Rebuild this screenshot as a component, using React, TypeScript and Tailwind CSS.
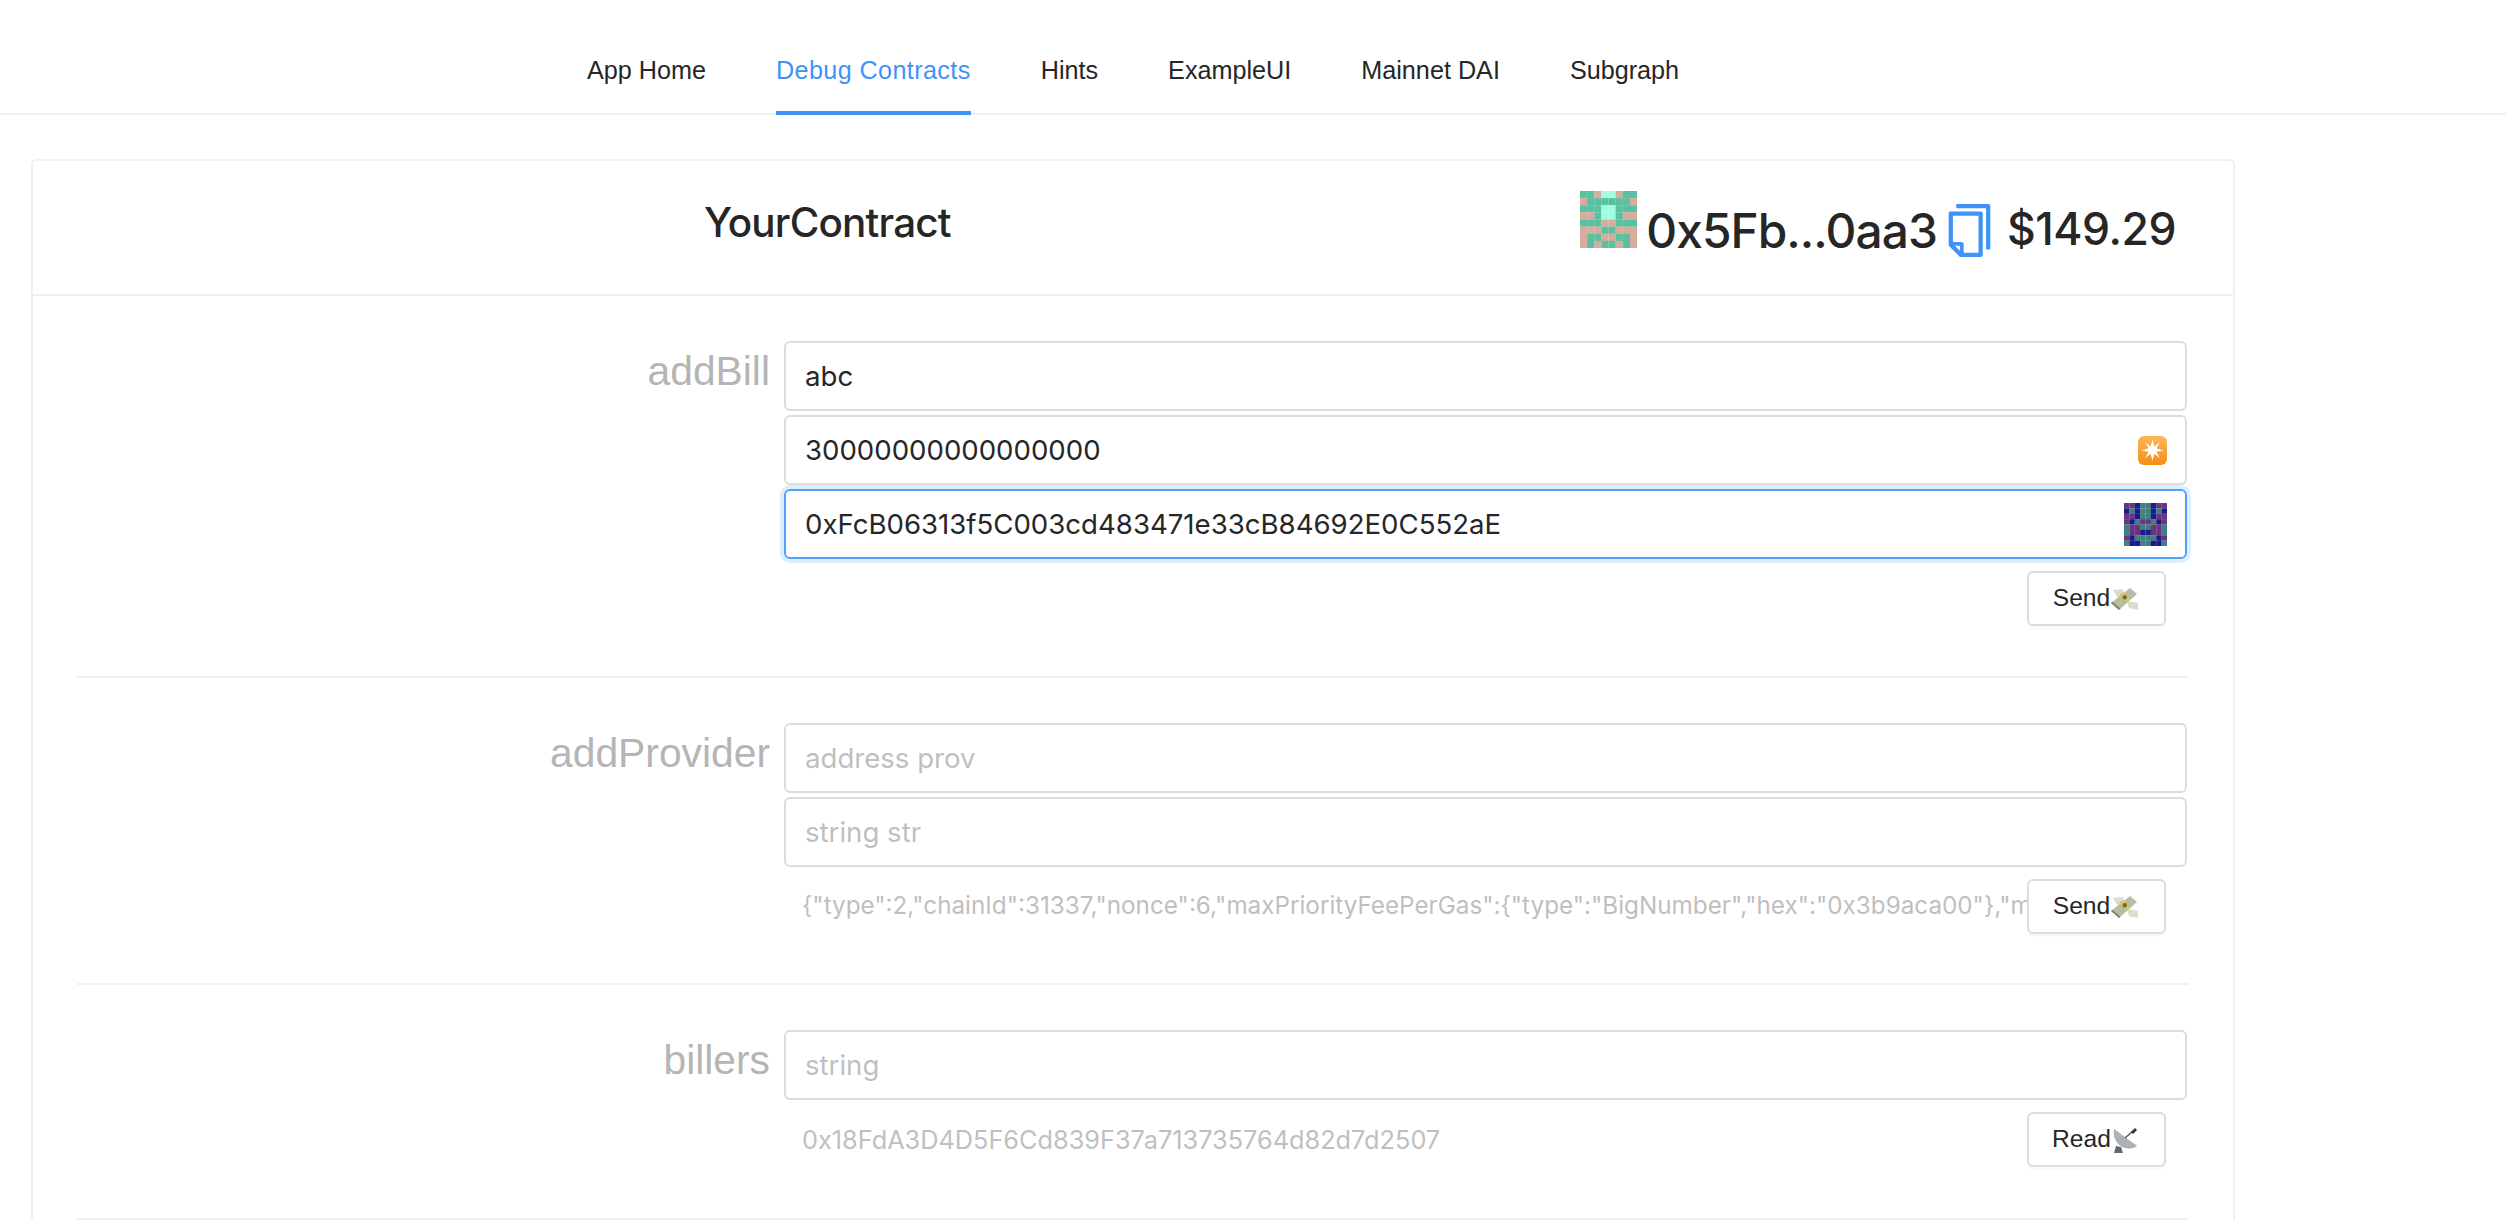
import React from 'react';

const navItems = ['App Home', 'Debug Contracts', 'Hints', 'ExampleUI', 'Mainnet DAI', 'Subgraph'];

const G = '#5ac1a0';
const K = '#d8ac9c';
const M = '#9ffde1';
const P = '#6b3480';
const B = '#1c1a8f';
const T = '#3f7f7f';

const contractBlockie = [
    [G, G, K, M, M, K, G, G],
    [K, G, G, G, G, G, G, K],
    [G, G, G, M, M, G, G, G],
    [K, K, G, M, M, G, K, K],
    [G, G, G, K, K, G, G, G],
    [K, K, K, G, G, K, K, K],
    [K, G, G, K, K, G, G, K],
    [K, G, K, G, G, K, G, K],
];

const addressBlockie = [
    [P, P, B, T, T, B, P, P],
    [B, T, B, T, T, B, T, B],
    [P, P, B, T, T, B, P, P],
    [P, B, T, P, P, T, B, P],
    [T, P, P, T, T, P, P, T],
    [T, P, P, B, B, P, P, T],
    [P, B, T, T, T, T, B, P],
    [T, B, B, T, T, B, B, T],
];

const Blockie = ({ cells, size }: { cells: string[][]; size: number }) => (
    <svg width={size} height={size} viewBox="0 0 8 8" className="shrink-0">
        {cells.map((row, y) => row.map((c, x) => <rect key={`${x}-${y}`} x={x} y={y} width={1.02} height={1.02} fill={c} />))}
    </svg>
);

const CopyIcon = () => (
    <svg width={53} height={53} viewBox="64 64 896 896" fill="#3f93f8" className="shrink-0">
        <path d="M832 64H296c-4.4 0-8 3.6-8 8v56c0 4.4 3.6 8 8 8h496v688c0 4.4 3.6 8 8 8h56c4.4 0 8-3.6 8-8V96c0-17.7-14.3-32-32-32zM704 192H192c-17.7 0-32 14.3-32 32v530.7c0 8.5 3.4 16.6 9.4 22.6l173.3 173.3c2.2 2.2 4.7 4 7.4 5.5v1.9h4.2c3.5 1.3 7.2 2 11 2H704c17.7 0 32-14.3 32-32V224c0-17.7-14.3-32-32-32zM350 856.2L263.9 770H350v86.2zM664 888H414V746c0-22.1-17.9-40-40-40H232V264h432v624z" />
    </svg>
);

const StarEmoji = () => (
    <svg width={29} height={29} viewBox="0 0 29 29" className="shrink-0">
        <defs>
            <linearGradient id="starBg" x1="0" y1="0" x2="0" y2="1">
                <stop offset="0" stopColor="#fdb85a" />
                <stop offset="1" stopColor="#f78d16" />
            </linearGradient>
        </defs>
        <rect width={29} height={29} rx={6} fill="url(#starBg)" />
        <path d="M14.5 3.5l1.9 7 5.4-4.3-3.4 6 7.1 2.3-7.1 1.3 3.4 6.5-5.4-4.6-1.9 7-1.9-7-5.4 4.6 3.4-6.5-7.1-1.3 7.1-2.3-3.4-6 5.4 4.3z" fill="#fff" />
    </svg>
);

const MoneyEmoji = () => (
    <svg width={30} height={26} viewBox="0 0 30 26" className="shrink-0">
        <path d="M3 4l10-1 2 8-8 0z" fill="#dcdccf" />
        <path d="M17 15l11 2 0 7-9-2z" fill="#dcdccf" />
        <path d="M1 17L20 2l7 6L9 24z" fill="#b4bfa2" />
        <path d="M1 17l8 7 1.5-1.2-8-7z" fill="#7d876d" />
        <path d="M9 9l3.5-2.8 8 7L17 16z" fill="#e8c04e" />
        <circle cx={14.8} cy={11.2} r={2.2} fill="#6d6a44" />
    </svg>
);

const DishEmoji = () => (
    <svg width={30} height={28} viewBox="0 0 30 28" className="shrink-0">
        <path d="M5 20l-2 7h9l-2-6z" fill="#5c6b78" />
        <path d="M3 3c-1 8 2 14 8 18 5 2 11 2 15-1z" fill="#d2d4d6" />
        <path d="M3 3l23 17c-4 3-10 3-15 1C5 17 2 11 3 3z" fill="#aeb1b4" />
        <path d="M14 12l8-7" stroke="#55585c" strokeWidth={1.5} />
        <path d="M20 6l4-4 2 2-4 4z" fill="#2f3134" />
    </svg>
);

const TextField = ({ placeholder, value, focused, suffix }: { placeholder?: string; value?: string; focused?: boolean; suffix?: React.ReactNode }) => (
    <div className={`flex h-[70px] items-center rounded-[6px] border-2 bg-white pl-[19px] pr-[18px] ${focused ? 'border-[#4fa3fb] shadow-[0_0_0_4px_rgba(24,144,255,0.15)]' : 'border-[#dcdcdc]'}`}>
        <input
            readOnly
            value={value}
            placeholder={placeholder}
            className="min-w-0 flex-1 bg-transparent pt-[2px] font-['Inter',sans-serif] text-[27.6px] text-[#262626] outline-none placeholder:text-[#bfbfbf]"
        />
        {suffix}
    </div>
);

const ActionRow = ({ result, resultSize, label, emoji }: { result?: string; resultSize?: string; label: string; emoji: React.ReactNode }) => (
    <div className="mt-[8px] flex h-[55px] items-center pl-[18px] pr-[21px]">
        <div className={`min-w-0 flex-1 overflow-hidden whitespace-nowrap font-['Inter',sans-serif] text-[#bfbfbf] ${resultSize}`}>{result}</div>
        <button className="flex h-[55px] w-[139px] shrink-0 items-center justify-center rounded-[6px] border-2 border-[#dcdcdc] bg-white text-[24.6px] text-[#262626] shadow-[0_3px_0_rgba(0,0,0,0.02)]">
            {label}
            {emoji}
        </button>
    </div>
);

const Section = ({ title, height, children }: { title: string; height: string; children: React.ReactNode }) => (
    <div className={`mx-[44px] flex border-b-2 border-[#f0f0f0] pt-[45px] ${height}`}>
        <div className="w-[693px] shrink-0 text-right text-[40.8px] leading-[60px] text-[#b5b5b5]">{title}</div>
        <div className="ml-[14px] mr-[2px] flex min-w-0 flex-1 flex-col gap-[4px]">{children}</div>
    </div>
);

export default function App() {
    return (
        <div className="h-screen overflow-hidden bg-white font-['Liberation_Sans',sans-serif]">
            {/* Nav */}
            <nav className="flex h-[115px] gap-[70px] border-b-2 border-[#f0f0f0] pl-[587px]">
                {navItems.map(item => (
                    <a
                        key={item}
                        className={`-mb-[2px] flex items-center whitespace-nowrap border-b-[4px] pt-[30px] text-[25.2px] ${item === 'Debug Contracts' ? 'border-[#3f93f8] tracking-[0.015em] text-[#3f93f8]' : 'border-transparent text-[#262626]'}`}
                    >
                        {item}
                    </a>
                ))}
            </nav>

            {/* Contract card */}
            <div className="ml-[31px] mt-[44px] w-[2204px] rounded-t-[6px] border-2 border-b-0 border-[#f0f0f0]">
                <div className="flex h-[135px] items-center justify-between border-b-2 border-[#f0f0f0] pl-[671px] pr-[57px]">
                    <h1 className="mb-[9px] font-['Inter',sans-serif] text-[40.4px] font-medium tracking-[-0.02em] text-[#262626]">YourContract</h1>
                    <div className="flex items-center text-[#262626]">
                        <span className="flex -translate-y-[8px]"><Blockie cells={contractBlockie} size={57} /></span>
                        <span className="ml-[9px] mt-[8px] font-['Inter',sans-serif] text-[47.8px] font-medium leading-none tracking-[-0.02em]">0x5Fb...0aa3</span>
                        <span className="ml-[6px] mt-[6px] flex"><CopyIcon /></span>
                        <span className="ml-[11px] mt-[4px] font-['Inter',sans-serif] text-[44.5px] font-medium leading-none tracking-[-0.01em]">$149.29</span>
                    </div>
                </div>

                <Section title="addBill" height="h-[382px]">
                    <TextField value="abc" />
                    <TextField value="30000000000000000" suffix={<StarEmoji />} />
                    <TextField value="0xFcB06313f5C003cd483471e33cB84692E0C552aE" focused suffix={<Blockie cells={addressBlockie} size={43} />} />
                    <ActionRow label="Send" emoji={<MoneyEmoji />} />
                </Section>

                <Section title="addProvider" height="h-[307px]">
                    <TextField placeholder="address prov" />
                    <TextField placeholder="string str" />
                    <ActionRow
                        label="Send"
                        emoji={<MoneyEmoji />}
                        resultSize="text-[24.25px]"
                        result={'{"type":2,"chainId":31337,"nonce":6,"maxPriorityFeePerGas":{"type":"BigNumber","hex":"0x3b9aca00"},"maxFeePerGas":{"type":"BigNumber"}}'}
                    />
                </Section>

                <Section title="billers" height="h-[235px]">
                    <TextField placeholder="string" />
                    <ActionRow label="Read" emoji={<DishEmoji />} resultSize="text-[25.3px]" result="0x18FdA3D4D5F6Cd839F37a713735764d82d7d2507" />
                </Section>
            </div>
        </div>
    );
}
